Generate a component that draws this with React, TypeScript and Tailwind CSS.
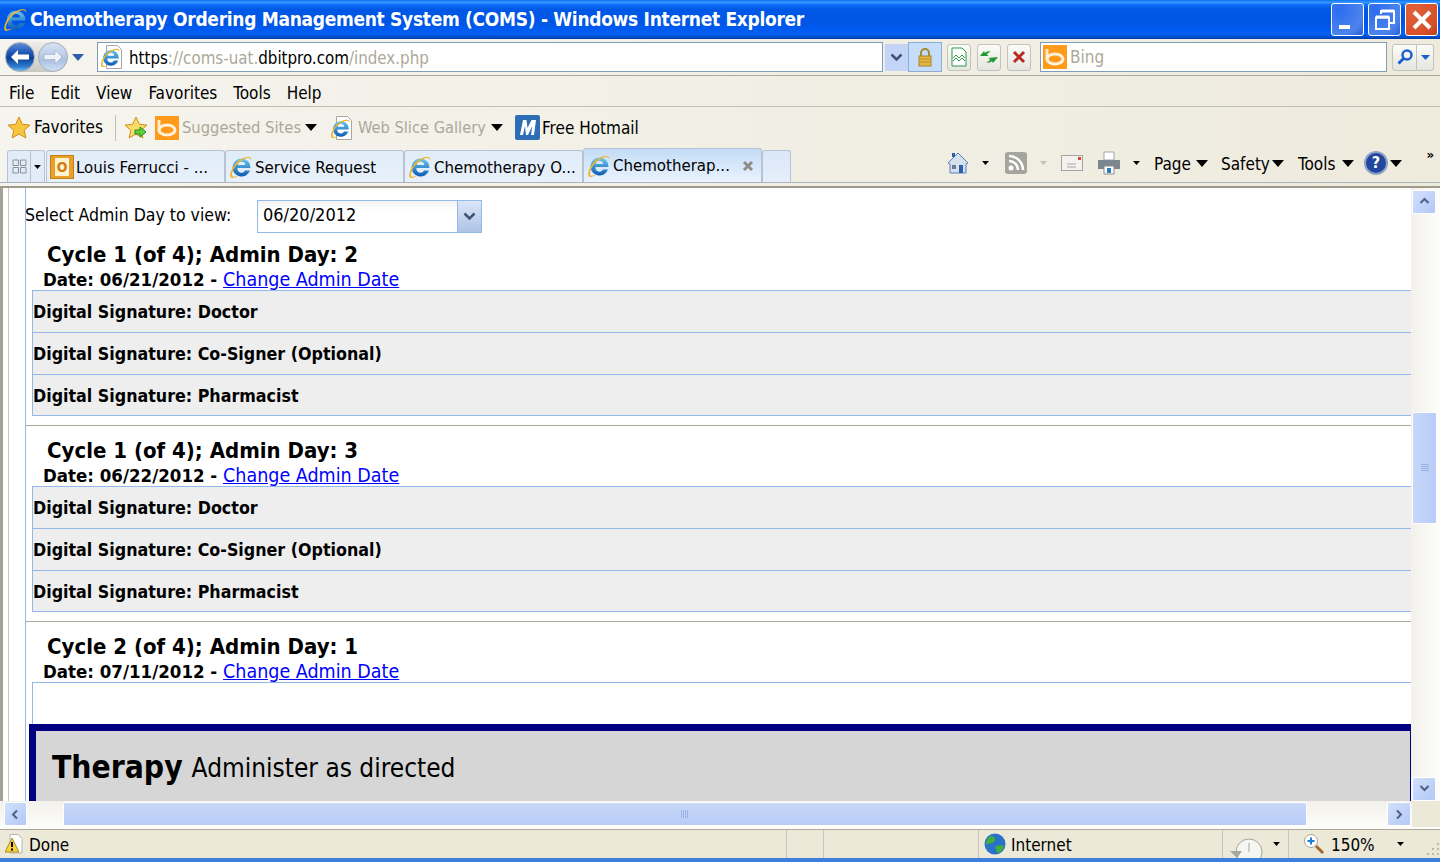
import React from "react";

const Tri = ({ small, gray }: { small?: boolean; gray?: boolean }) => (
  <svg width={small ? 7 : 12} height={small ? 4 : 7} viewBox="0 0 12 7" className="shrink-0">
    <path d="M0 0h12L6 7z" fill={gray ? "#c4c2b6" : "#000"} />
  </svg>
);

const IeIcon = ({ size = 24 }: { size?: number }) => (
  <svg width={size} height={size} viewBox="0 0 24 24" className="shrink-0">
    <defs>
      <linearGradient id="ieblue" x1="0" y1="0" x2="0" y2="1">
        <stop offset="0" stopColor="#6cc8f2" />
        <stop offset="1" stopColor="#0a5cb5" />
      </linearGradient>
    </defs>
    <path
      fillRule="evenodd"
      d="M12.500 3.500a9 9 0 1 0 8.500 12h-5a4 4 0 0 1-7.500-2.500h13A9 9 0 0 0 12.500 3.500zM8.800 10a3.800 3.800 0 0 1 7.500 0z"
      fill="url(#ieblue)"
    />
    <path
      d="M22.500 4C21 .5 14 2 8.500 6.500 3.500 11 0 19 1.500 22c1 2 5 .5 8-1.500-3 1-5.500 1.700-6.300.6C2 19 5 11.500 10 7.500 15 3.500 20 1.500 21.500 4.500z"
      fill="#f0b429"
    />
  </svg>
);

const PageIe = () => (
  <div className="relative w-[24px] h-[24px] shrink-0">
    <svg width="24" height="24" viewBox="0 0 24 24" className="absolute left-0 top-0">
      <path d="M6.500 .5h11l4 4v19h-15z" fill="#fff" stroke="#a5a5a5" />
    </svg>
    <div className="absolute left-0 top-[2px]">
      <IeIcon size={21} />
    </div>
  </div>
);

const BingIcon = ({ size = 24 }: { size?: number }) => (
  <svg width={size} height={size} viewBox="0 0 24 24" className="shrink-0">
    <rect width="24" height="24" fill="#ff9a1a" />
    <path d="M4 4v11" stroke="#ffe9c8" strokeWidth="3" />
    <ellipse cx="12" cy="14" rx="8" ry="5" fill="none" stroke="#fff3de" strokeWidth="3" />
  </svg>
);

const NavButton = ({ dir }: { dir: "back" | "forward" }) => (
  <div
    className={
      dir === "back"
        ? "w-[30px] h-[30px] rounded-full border border-[#a9adb4] bg-[linear-gradient(#5f8fd8_0%,#1d57b5_35%,#0c3f95_55%,#2f7fd0_85%,#6fbcf0_100%)] flex items-center justify-center"
        : "w-[30px] h-[30px] rounded-full border border-[#a9adb4] bg-[linear-gradient(#d7e2f2_0%,#bccfe8_40%,#a9c0e0_60%,#cfe0f4_100%)] flex items-center justify-center"
    }
  >
    <svg width="20" height="16" viewBox="0 0 20 16" className={dir === "back" ? "" : "rotate-180"}>
      <path d="M1 8l7-7v4.500h11v5H8V15z" fill={dir === "back" ? "#fff" : "#eef3fa"} stroke={dir === "back" ? "none" : "#9aa9bd"} strokeWidth=".6" />
    </svg>
  </div>
);

const SmallBtn = ({ children, w = 24 }: { children: React.ReactNode; w?: number }) => (
  <div
    className="h-[27px] rounded-[3px] border border-[#c3c3bb] bg-[linear-gradient(#fbfbf8,#e6e6e0)] flex items-center justify-center shrink-0"
    style={{ width: w }}
  >
    {children}
  </div>
);

const ChevronDown = () => (
  <svg width="13" height="9" viewBox="0 0 13 9">
    <path d="M1.500 1.500l5 5 5-5" fill="none" stroke="#3f5279" strokeWidth="2.500" />
  </svg>
);

const ScrollBtn = ({ dir, className }: { dir: "up" | "down" | "left" | "right"; className: string }) => {
  const d = {
    up: "M1.500 6l4-4 4 4",
    down: "M1.500 2l4 4 4-4",
    left: "M7 1.500l-4 4 4 4",
    right: "M3 1.500l4 4-4 4",
  }[dir];
  return (
    <div
      className={
        "rounded-[2px] border border-white bg-[linear-gradient(135deg,#d2e0fb,#b2c8f7)] flex items-center justify-center shrink-0 " +
        className
      }
    >
      <svg width="11" height="11" viewBox="0 0 11 11">
        <path d={d} fill="none" stroke="#4d6185" strokeWidth="2" />
      </svg>
    </div>
  );
};

const Tab = ({ children, label }: { children: React.ReactNode; label: string }) => (
  <div className="w-[179px] h-[32px] shrink-0 rounded-t-[3px] border border-b-0 border-[#b7c3d3] bg-[linear-gradient(#e0ecf9,#e8f0fa)] flex items-center pl-[3px] gap-[2px] text-[16.7px] leading-none text-black">
    {children}
    <span className="whitespace-nowrap pt-[1px]">{label}</span>
  </div>
);

const DayBlock = ({ cycle, day, date, signatures }: { cycle: number; day: number; date: string; signatures: boolean }) => (
  <div className={signatures ? "h-[196px] border-b border-[#aca899]" : ""}>
    <div className="h-[60px] relative">
      <div className="absolute left-[21px] top-[10px] text-[22px] leading-[30px] font-bold whitespace-nowrap">
        Cycle {cycle} (of 4); Admin Day: {day}
      </div>
      <div className="absolute left-[17px] top-[38px] text-[18.500px] leading-[24px] font-bold whitespace-nowrap">
        Date: {date} - <a className="font-normal text-[19.500px] text-[#0000ff] underline">Change Admin Date</a>
      </div>
    </div>
    {signatures ? (
      <div className="ml-[6px] border-l border-t border-[#94b9e9] bg-[#eeeeee] font-bold text-[17.700px]">
        <div className="h-[42px] pt-[1px] border-b border-[#94b9e9] flex items-center">Digital Signature: Doctor</div>
        <div className="h-[42px] border-b border-[#94b9e9] flex items-center">Digital Signature: Co-Signer (Optional)</div>
        <div className="h-[41px] pt-[1px] border-b border-[#94b9e9] flex items-center">Digital Signature: Pharmacist</div>
      </div>
    ) : (
      <div className="ml-[6px] h-[42px] border-l border-t border-[#94b9e9]" />
    )}
  </div>
);

export default function App() {
  return (
    <div className="w-[1440px] h-[862px] overflow-hidden flex flex-col bg-[#ece9d8] text-black font-['DejaVu_Sans_Condensed','DejaVu_Sans',sans-serif] [font-stretch:condensed]">
      {/* title bar */}
      <div className="h-[39px] shrink-0 flex items-center pl-[3px] pr-[2px] bg-[linear-gradient(#0a74f5_0%,#3a97ff_6%,#0b70f8_12%,#0058e6_24%,#0055e5_60%,#005bf2_75%,#0060ef_88%,#0050d0_94%,#003ea8_100%)]">
        <IeIcon size={25} />
        <span className="ml-[2px] text-white font-bold text-[19px] tracking-[-0.31px] leading-none whitespace-nowrap">
          Chemotherapy Ordering Management System (COMS) - Windows Internet Explorer
        </span>
        <div className="ml-auto flex gap-[4px]">
          <div className="w-[33px] h-[33px] rounded-[3px] border border-white bg-[radial-gradient(circle_at_20%_20%,#2c6cf0,#4d83ec_70%,#2a5dd8)] relative flex items-end pl-[7px] pb-[6px]">
            <div className="w-[11px] h-[4px] bg-white" />
          </div>
          <div className="w-[33px] h-[33px] rounded-[3px] border border-white bg-[radial-gradient(circle_at_20%_20%,#2c6cf0,#4d83ec_70%,#2a5dd8)] flex items-center justify-center">
            <svg width="22" height="22" viewBox="0 0 22 22">
              <path d="M7 5V2h13v12h-4" fill="none" stroke="#fff" strokeWidth="2" />
              <path d="M7 2h13" stroke="#fff" strokeWidth="3" />
              <path d="M2 8.500h13V20H2z" fill="none" stroke="#fff" strokeWidth="2" />
              <path d="M2 8h13" stroke="#fff" strokeWidth="3" />
            </svg>
          </div>
          <div className="w-[33px] h-[33px] rounded-[3px] border border-white bg-[radial-gradient(circle_at_20%_20%,#e0603a,#d8502a_70%,#b8401e)] flex items-center justify-center">
            <svg width="22" height="22" viewBox="0 0 22 22">
              <path d="M3 3l16 16M19 3L3 19" stroke="#fff" strokeWidth="4" />
            </svg>
          </div>
        </div>
      </div>

      {/* address row */}
      <div className="h-[37px] shrink-0 flex items-center pl-[5px] border-b border-[#aca899] bg-[linear-gradient(90deg,#f5f4ee,#eeebdd)]">
        <div className="flex gap-[3px] rounded-full bg-[linear-gradient(#ececea,#c9c9c4)]">
          <NavButton dir="back" />
          <NavButton dir="forward" />
        </div>
        <svg width="12" height="7" viewBox="0 0 12 7" className="ml-[4px]">
          <path d="M0 0h12L6 7z" fill="#2f5fa8" />
        </svg>
        <div className="ml-[13px] w-[786px] h-[30px] shrink-0 border border-[#7f9db9] bg-white flex items-center pl-[2px] gap-[5px] text-[16.800px] whitespace-nowrap">
          <PageIe />
          <span className="pt-[3px]">
            https<span className="text-[#aca899]">://coms-uat.</span>dbitpro.com<span className="text-[#aca899]">/index.php</span>
          </span>
        </div>
        <div className="ml-[2px] w-[23px] h-[27px] bg-[#c3d4f7] flex items-center justify-center shrink-0">
          <ChevronDown />
        </div>
        <div className="w-[34px] h-[30px] bg-[#c5dcfa] border border-[#8cacd0] flex items-center justify-center shrink-0">
          <svg width="16" height="20" viewBox="0 0 16 20">
            <path d="M4 9V6a4 4 0 0 1 8 0v3" fill="none" stroke="#a58a34" strokeWidth="2" />
            <rect x="2" y="9" width="12" height="10" fill="#e4b83e" stroke="#a8822a" />
            <path d="M3 12h10M3 15h10" stroke="#b8922e" />
          </svg>
        </div>
        <div className="ml-[5px] flex gap-[6px]">
          <SmallBtn>
            <svg width="16" height="20" viewBox="0 0 16 20">
              <path d="M1 1h10l4 4v14H1z" fill="#fff" stroke="#2f9a4a" />
              <path d="M2 11l3-3 3 3 3-3 3 3M2 14l3-3 3 3 3-3 3 3" fill="none" stroke="#2f9a4a" />
            </svg>
          </SmallBtn>
          <SmallBtn>
            <svg width="20" height="18" viewBox="0 0 20 18">
              <path d="M1 8l4-5 1 2c2-2 4-2 6-1-2 0-4 1-4 3l2 1z" fill="#1f9a2e" />
              <path d="M19 9l-5 6-1-2c-2 2-4 2-6 1 2 0 4-1 4-3l-2-1z" fill="#1f9a2e" />
            </svg>
          </SmallBtn>
          <SmallBtn>
            <svg width="14" height="14" viewBox="0 0 14 14">
              <path d="M2 2l10 10M12 2L2 12" stroke="#b52a26" strokeWidth="3" />
            </svg>
          </SmallBtn>
        </div>
        <div className="ml-[9px] w-[347px] h-[30px] shrink-0 border border-[#7f9db9] bg-white flex items-center pl-[2px] gap-[3px] text-[17px] text-[#aca899]">
          <BingIcon />
          <span className="pt-[2px]">Bing</span>
        </div>
        <div className="ml-[5px] w-[25px] h-[27px] rounded-l-[3px] border border-[#c3c3bb] bg-[linear-gradient(#fbfbf8,#e6e6e0)] flex items-center justify-center shrink-0">
          <svg width="18" height="18" viewBox="0 0 18 18">
            <circle cx="11" cy="7" r="4.500" fill="none" stroke="#1c5fcf" strokeWidth="2.500" />
            <path d="M7.500 10.500L2.500 15.500" stroke="#1c5fcf" strokeWidth="3" />
          </svg>
        </div>
        <div className="w-[17px] h-[27px] rounded-r-[3px] border border-l-0 border-[#c3c3bb] bg-[linear-gradient(#fbfbf8,#e6e6e0)] flex items-center justify-center shrink-0">
          <svg width="9" height="5" viewBox="0 0 9 5">
            <path d="M0 0h9L4.500 5z" fill="#1c5fcf" />
          </svg>
        </div>
      </div>

      {/* menu row */}
      <div className="h-[31px] shrink-0 flex items-center pt-[5px] pl-[9px] gap-[16px] text-[17px] border-b border-[#c0bfb4] bg-[linear-gradient(90deg,#f5f4ee,#eeebdd)]">
        <span>File</span>
        <span>Edit</span>
        <span>View</span>
        <span>Favorites</span>
        <span>Tools</span>
        <span>Help</span>
      </div>

      {/* favorites bar + tab strip */}
      <div className="h-[81px] shrink-0 flex flex-col bg-[linear-gradient(90deg,#f5f4ee,#eeebdd)] border-b-2 border-[#9d9a8a]">
        <div className="h-[41px] shrink-0 flex items-center pl-[7px] text-[17px] whitespace-nowrap">
          <svg width="24" height="24" viewBox="0 0 24 24" className="shrink-0">
            <path d="M12 1l3.300 7.300 7.700.8-5.800 5.200 1.700 7.700L12 18l-6.900 4 1.700-7.700L1 9.100l7.700-.8z" fill="#f7c63d" stroke="#d58c1c" />
          </svg>
          <span className="ml-[3px] w-[69px]">Favorites</span>
          <div className="ml-[12px] w-px h-[26px] bg-[#c0bfb4]" />
          <div className="ml-[8px] relative w-[24px] h-[24px] shrink-0">
            <svg width="24" height="24" viewBox="0 0 24 24">
              <path d="M12 1l3.300 7.300 7.700.8-5.800 5.200 1.700 7.700L12 18l-6.900 4 1.700-7.700L1 9.100l7.700-.8z" fill="#f7dc68" stroke="#d58c1c" />
              <path d="M11 14h5v-3l6 5-6 5v-3h-5z" fill="#5fd03c" stroke="#2a8a1e" />
            </svg>
          </div>
          <div className="ml-[7px]">
            <BingIcon />
          </div>
          <span className="ml-[3px] pt-[2px] w-[119px] text-[16.400px] text-[#aca899]">Suggested Sites</span>
          <div className="ml-[4px]">
            <Tri />
          </div>
          <div className="ml-[13px]">
            <PageIe />
          </div>
          <span className="ml-[4px] pt-[2px] w-[127px] text-[16.300px] text-[#aca899]">Web Slice Gallery</span>
          <div className="ml-[6px]">
            <Tri />
          </div>
          <svg width="25" height="25" viewBox="0 0 25 25" className="ml-[12px] shrink-0">
            <rect width="25" height="25" rx="2" fill="#2f6db5" />
            <path d="M5 20l3-15h3.500l1 8 4-8H21l-2 15h-3l1.300-9-4.300 9h-2l-1-9-2 9z" fill="#fff" />
          </svg>
          <span className="ml-[2px] pt-[2px]">Free Hotmail</span>
        </div>
        <div className="h-[35px] shrink-0 flex items-end pl-[7px] relative border-b border-[#a9b3c0]">
          <div className="w-[38px] h-[32px] shrink-0 rounded-t-[3px] border border-b-0 border-[#b7c3d3] bg-[#e2ecf8] flex items-center">
            <div className="w-[23px] h-full border-r border-[#b7c3d3] flex items-center justify-center">
              <svg width="15" height="15" viewBox="0 0 15 15">
                <path d="M1 1h5.500v5.500H1zM8.500 1H14v5.500H8.500zM1 8.500h5.500V14H1zM8.500 8.500H14V14H8.500z" fill="none" stroke="#8b8f98" />
              </svg>
            </div>
            <div className="flex-1 flex justify-center">
              <Tri small />
            </div>
          </div>
          <div className="ml-px flex items-end">
            <Tab label="Louis Ferrucci - ...">
              <div className="w-[24px] h-[24px] shrink-0 bg-[#e8a02a] border border-[#c58015] flex items-center justify-center">
                <div className="w-[14px] h-[18px] bg-[#fdf3d0] flex items-center justify-center text-[#d27a10] text-[14px] font-bold leading-none">O</div>
              </div>
            </Tab>
            <Tab label="Service Request">
              <IeIcon />
            </Tab>
            <Tab label="Chemotherapy O...">
              <IeIcon />
            </Tab>
            <div className="w-[179px] h-[34px] shrink-0 rounded-t-[3px] border border-b-0 border-[#b7c3d3] bg-[linear-gradient(#c3dcf7,#eaf3fd)] flex items-center pl-[3px] gap-[2px] text-[16.7px] leading-none">
              <IeIcon />
              <span className="whitespace-nowrap">Chemotherap...</span>
              <svg width="12" height="12" viewBox="0 0 12 12" className="ml-auto mr-[7px] shrink-0">
                <path d="M2 2l8 8M10 2l-8 8" stroke="#8d8d88" strokeWidth="3" />
              </svg>
            </div>
            <div className="w-[29px] h-[32px] shrink-0 rounded-t-[3px] border border-b-0 border-[#b7c3d3] bg-[linear-gradient(#dae7f8,#e6effb)]" />
          </div>
          <div className="ml-[156px] mb-[4px] h-[30px] flex items-center text-[17px] whitespace-nowrap">
            <svg width="22" height="22" viewBox="0 0 22 22" className="shrink-0">
              <path d="M1 11L11 1l10 10-2 1v9H3v-9z" fill="#d6dfee" stroke="#5d7fb8" />
              <path d="M12 13h4v8h-4z" fill="#2f5fa8" />
              <path d="M5 13h4v4H5z" fill="#6b7a90" />
              <path d="M5 1h3v4H5z" fill="#2f5fa8" />
            </svg>
            <div className="ml-[13px]"><Tri small /></div>
            <svg width="22" height="22" viewBox="0 0 22 22" className="ml-[16px] shrink-0">
              <rect width="22" height="22" rx="3" fill="#a5a59e" />
              <circle cx="6" cy="16" r="2.500" fill="#fff" />
              <path d="M4 9a9 9 0 0 1 9 9M4 4a14 14 0 0 1 14 14" fill="none" stroke="#fff" strokeWidth="2.500" />
            </svg>
            <div className="ml-[13px]"><Tri small gray /></div>
            <svg width="22" height="16" viewBox="0 0 22 16" className="ml-[14px] shrink-0">
              <rect x=".5" y=".5" width="21" height="15" fill="#f4f2ee" stroke="#a5a59e" />
              <path d="M6 9h9M6 12h9" stroke="#a5a59e" />
              <rect x="17" y="2" width="3" height="3" fill="#e0403a" />
            </svg>
            <svg width="24" height="24" viewBox="0 0 24 24" className="ml-[14px] shrink-0">
              <path d="M7 1h10v8H7z" fill="#fff" stroke="#a5a5a5" />
              <path d="M1 9h22v9H1z" fill="#7c8691" />
              <path d="M7 15h10v8H7z" fill="#fff" stroke="#8a8a8a" />
              <path d="M10 17h4v5h-4z" fill="#2b7fb8" />
            </svg>
            <div className="ml-[12px]"><Tri small /></div>
            <span className="ml-[14px] w-[38px] pt-[3px]">Page</span>
            <div className="ml-[4px]"><Tri /></div>
            <span className="ml-[13px] w-[46px] pt-[3px]">Safety</span>
            <div className="ml-[5px]"><Tri /></div>
            <span className="ml-[14px] w-[40px] pt-[3px]">Tools</span>
            <div className="ml-[4px]"><Tri /></div>
            <div className="ml-[10px] w-[24px] h-[24px] rounded-full border-2 border-[#8ea3c8] bg-[#24479e] text-white font-bold text-[16px] leading-none flex items-center justify-center shrink-0">?</div>
            <div className="ml-[2px]"><Tri /></div>
          </div>
          <span className="absolute right-[6px] top-0 text-[13px] leading-none font-bold">»</span>
        </div>
      </div>

      {/* page area */}
      <div className="flex-1 min-h-0 flex flex-col bg-white">
        <div className="flex-1 min-h-0 flex">
          <div className="w-[9px] shrink-0 border-l-[3px] border-r border-l-[#a5a293] border-r-[#c8c6bc] bg-white" />
          <div className="w-[16px] shrink-0 bg-white" />
          <div className="w-[1386px] shrink-0 overflow-hidden border-l border-[#94b9e9] text-[19px] leading-[24px]">
            <div className="h-[42px] flex items-start pt-[12px]">
              <span className="w-[231px] h-[33px] -ml-px mr-px leading-[30px] shrink-0 text-[17.500px] whitespace-nowrap">Select Admin Day to view:</span>
              <div className="w-[225px] h-[33px] shrink-0 flex border border-[#94b9e9] text-[18px]">
                <div className="flex-1 pl-[5px] leading-[27px] bg-[linear-gradient(#f2f2f2,#ffffff_30%)]">06/20/2012</div>
                <div className="w-[24px] bg-[linear-gradient(#dce6f7,#aec3e6)] border-l border-[#94b9e9] flex items-center justify-center">
                  <ChevronDown />
                </div>
              </div>
            </div>
            <DayBlock cycle={1} day={2} date="06/21/2012" signatures />
            <DayBlock cycle={1} day={3} date="06/22/2012" signatures />
            <DayBlock cycle={2} day={1} date="07/11/2012" signatures={false} />
            <div className="ml-[3px] h-[80px] border-t-[7px] border-l-[7px] border-r border-[#000080] bg-[#d6d6d6] flex items-center pl-[16px] pb-[2px] whitespace-nowrap">
              <span className="font-bold text-[31.500px]">Therapy</span>
              <span className="ml-[9px] pt-[3px] text-[26px]">Administer as directed</span>
            </div>
          </div>
          <div className="w-[29px] shrink-0 flex flex-col pl-[1px] pr-[3px] pt-[2px] bg-[linear-gradient(90deg,#f3f1ec,#fdfdfa)]">
            <ScrollBtn dir="up" className="w-[24px] h-[24px]" />
            <div className="flex-1 min-h-0 pt-[198px]">
              <div className="h-[112px] rounded-[2px] border border-white bg-[linear-gradient(90deg,#c7d7f8,#b8ccf8)] flex items-center justify-center">
                <div className="w-[8px] h-[8px] bg-[repeating-linear-gradient(#9db3e6_0,#9db3e6_1px,transparent_1px,transparent_2px)]" />
              </div>
            </div>
            <ScrollBtn dir="down" className="w-[24px] h-[24px]" />
          </div>
        </div>
        <div className="h-[29px] shrink-0 flex items-center pl-[4px] pb-[2px] border-b border-[#aca899] bg-[linear-gradient(#f3f1ec,#fdfdfa)]">
          <ScrollBtn dir="left" className="w-[23px] h-[24px]" />
          <div className="ml-[36px] w-[1244px] h-[24px] shrink-0 rounded-[2px] border border-white bg-[linear-gradient(#c7d7f8,#b8ccf8)] flex items-center justify-center">
            <div className="w-[8px] h-[8px] bg-[repeating-linear-gradient(90deg,#9db3e6_0,#9db3e6_1px,transparent_1px,transparent_2px)]" />
          </div>
          <div className="ml-[80px]">
            <ScrollBtn dir="right" className="w-[24px] h-[24px]" />
          </div>
          <div className="ml-px self-stretch flex-1 bg-[#ece9d8]" />
        </div>
      </div>

      {/* status bar */}
      <div className="h-[28px] shrink-0 flex items-center text-[17px] bg-[#ece9d8] overflow-hidden whitespace-nowrap relative">
        <svg width="18" height="20" viewBox="0 0 18 20" className="ml-[5px] shrink-0">
          <path d="M5 .5h8l4 4V19H5z" fill="#fff" stroke="#b5b5ad" />
          <path d="M7 4l7 14H0z" fill="#f7d33c" stroke="#b08a1c" />
          <path d="M7 8v5M7 14.500v2" stroke="#000" strokeWidth="2" />
        </svg>
        <span className="ml-[6px] pt-[4px] w-[40px]">Done</span>
        <div className="ml-[717px] w-px h-full bg-[#c8c6bc]" />
        <div className="ml-[36px] w-px h-full bg-[#c8c6bc]" />
        <div className="ml-[154px] w-px h-full bg-[#c8c6bc]" />
        <svg width="22" height="22" viewBox="0 0 22 22" className="ml-[5px] shrink-0">
          <circle cx="11" cy="11" r="10.500" fill="#2a72c8" />
          <path d="M6 3c4 0 7 3 4 6-2 2-6 1-8 3 0-4 1-7 4-9zM12 13c3-1 7-1 8 0-1 4-4 7-7 7 1-2-3-5-1-7z" fill="#3fae3a" />
        </svg>
        <span className="ml-[5px] w-[60px] pt-[4px]">Internet</span>
        <div className="ml-[151px] w-px h-full bg-[#c8c6bc]" />
        <svg width="34" height="24" viewBox="0 0 34 24" className="ml-[6px] mt-[10px] shrink-0">
          <circle cx="20" cy="15" r="13" fill="#f5f5f2" stroke="#a5a59e" />
          <path d="M1 14h12l-5 7z" fill="#a5a59e" />
          <path d="M20 6v9" stroke="#a5a59e" />
        </svg>
        <div className="ml-[10px]"><Tri small /></div>
        <div className="ml-[8px] w-px h-full bg-[#c8c6bc]" />
        <svg width="22" height="22" viewBox="0 0 22 22" className="ml-[14px] shrink-0">
          <circle cx="8" cy="8" r="6.500" fill="#fff" stroke="#a5a59e" />
          <path d="M8 4.500v7M4.500 8h7" stroke="#1c7ad8" strokeWidth="2" />
          <path d="M13 13l7 7" stroke="#a5682a" strokeWidth="3" />
        </svg>
        <span className="ml-[6px] w-[45px] pt-[4px] text-[17px]">150%</span>
        <div className="ml-[22px]"><Tri small /></div>
        <svg width="14" height="14" viewBox="0 0 14 14" className="ml-[22px] mt-[8px] shrink-0">
          <path d="M12 2v2M12 7v2M7 7v2M12 12v2M7 12v2M2 12v2" stroke="#bdbaa8" strokeWidth="2" />
        </svg>
      </div>
      <div className="h-[4px] shrink-0 bg-[#3a80dc]" />
    </div>
  );
}
